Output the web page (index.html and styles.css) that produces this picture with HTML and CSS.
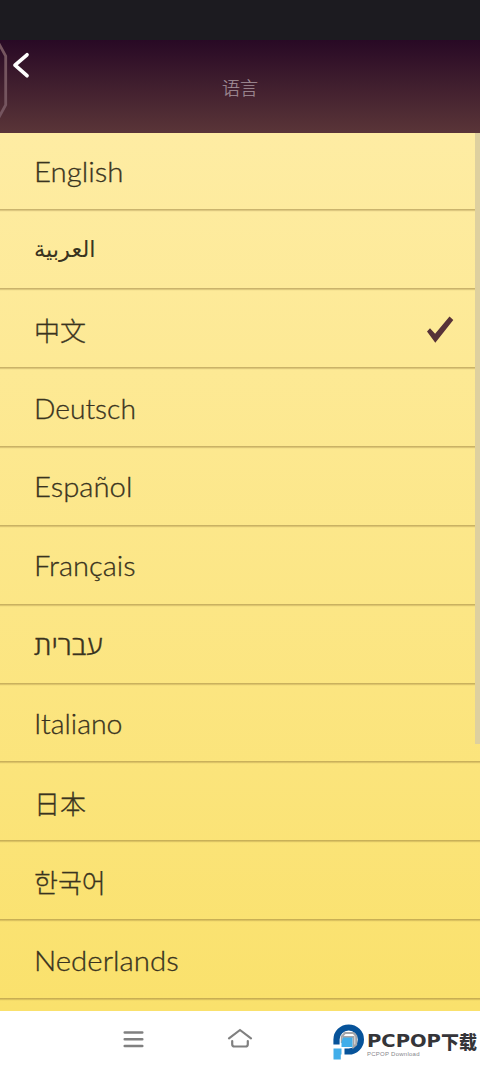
FILE: index.html
```html
<!DOCTYPE html>
<html lang="zh">
<head>
<meta charset="utf-8">
<title>语言</title>
<link rel="stylesheet" href="styles.css">
</head>
<body>
<div class="screen">
  <div class="status"></div>
  <header class="header">
    <svg class="header-art" width="40" height="93" viewBox="0 0 40 93" fill="none">
      <path d="M-2 2L5.7 16V65L-2 79" stroke="#75555f" stroke-width="2.8"/>
      <path d="M27 14.8L15 25.2L27 35.7" stroke="#fff" stroke-width="3.7" stroke-linecap="round" stroke-linejoin="round"/>
    </svg>
    <h1 class="title">语言</h1>
  </header>
  <main class="list">
    <div class="row"><span class="name english">English</span></div>
    <div class="row"><span class="name arabic" lang="ar">العربية</span></div>
    <div class="row"><span class="name cjk">中文</span>
      <svg class="check" width="28" height="28" viewBox="0 0 28 28"><path d="M1 15.4L4 12.2L9.1 17.7L23.5 .5L27.3 4L9.3 26.7Z" fill="#573238"/></svg>
    </div>
    <div class="row"><span class="name deutsch">Deutsch</span></div>
    <div class="row"><span class="name espanol">Español</span></div>
    <div class="row"><span class="name francais">Français</span></div>
    <div class="row"><span class="name hebrew" lang="he">עברית</span></div>
    <div class="row"><span class="name italiano">Italiano</span></div>
    <div class="row"><span class="name cjk japanese" lang="ja">日本</span></div>
    <div class="row"><span class="name korean" lang="ko">한국어</span></div>
    <div class="row"><span class="name nederlands">Nederlands</span></div>
    <div class="scrollbar"></div>
  </main>
  <footer class="nav">
    <svg class="menu" width="22" height="18" viewBox="0 0 22 18"><path d="M1.7 2.5H19.3M1.7 9.3H19.3M1.7 16H19.3" stroke="#808080" stroke-width="2.5" stroke-linecap="round"/></svg>
    <svg class="home" width="28" height="22" viewBox="0 0 28 22" fill="none" stroke="#808080" stroke-width="2.2" stroke-linecap="round" stroke-linejoin="round"><path d="M3 11.4L14 3L25 11.4M6.2 14V17.2Q6.2 19.5 8.5 19.5H19.5Q21.8 19.5 21.8 17.2V14"/></svg>
    <div class="brand">
      <svg class="logo" width="32" height="37" viewBox="0 0 32 37">
        <path d="M3.5 20.5V15.5A12.2 12 0 1 1 15.7 27.5H11.5" fill="none" stroke="#07539a" stroke-width="6.2"/>
        <path d="M8.8 19V12.5L12 9H20.5L23.2 12V20.5L20.5 23V13H10" fill="none" stroke="#a4a5a9" stroke-width="2"/>
        <path d="M10 13.5H19.5V23H8.5V30.5H7.8V35.5H.5V24.5H8.5V18Z" fill="#41aeea"/>
      </svg>
      <div class="brand-text"><div class="brand-name"><span class="brand-latin">PCPOP</span><span class="brand-cn">下载</span></div><div class="brand-sub">PCPOP Download</div></div>
    </div>
  </footer>
</div>
</body>
</html>
```
FILE: styles.css
```css
body { margin: 0; }
.screen {
  width: 480px;
  height: 1067px;
  display: flex;
  flex-direction: column;
  overflow: hidden;
  background: #fff;
}
.status { height: 40px; flex: none; background: #1c1b20; }
.header {
  height: 93px;
  flex: none;
  position: relative;
  display: flex;
  justify-content: center;
  background: linear-gradient(#280925, #5a3538);
}
.header-art { position: absolute; left: 0; top: 0; }
.title {
  margin: 34px 0 0;
  font: 300 18px/27px "Noto Sans CJK SC", sans-serif;
  color: #a28f98;
  -webkit-text-stroke: .2px #a28f98;
}
.list {
  height: 878px;
  flex: none;
  position: relative;
  overflow: hidden;
  box-sizing: border-box;
  background: linear-gradient(#feeca3, #fae16c);
}
.row {
  height: 78.86px;
  box-sizing: border-box;
  border-bottom: 1px solid rgba(139, 112, 50, .45);
  box-shadow: 0 1px 1px rgba(139, 112, 50, .28);
  padding: 3px 26px 0 34px;
  display: flex;
  align-items: center;
  justify-content: space-between;
}
.row:first-child { margin-top: -1.4px; }
.name {
  font: 300 27px/40px Lato, "Open Sans", sans-serif;
  color: #393320;
  white-space: nowrap;
  transform-origin: left center;
  -webkit-text-stroke: .3px #393320;
}
.english { transform: scaleX(1.09); }
.deutsch { transform: scaleX(1.045); }
.espanol { transform: scaleX(1.085); }
.francais { transform: scaleX(1.075); }
.italiano { transform: scaleX(1.055); }
.nederlands { transform: scaleX(1.09); }
.arabic { font: 400 22.5px/36px "DejaVu Sans", sans-serif; -webkit-text-stroke: 0; padding-bottom: 4px; }
.hebrew { font: 300 26px/40px "Open Sans", sans-serif; transform: scaleX(1.09); }
.cjk { font: 300 26px/40px "Noto Sans CJK SC", sans-serif; }
.japanese { font-family: "Noto Sans CJK JP", sans-serif; }
.korean { font: 300 26px/40px "Noto Sans CJK KR", sans-serif; }
.scrollbar {
  position: absolute;
  top: 0;
  right: 0;
  width: 5px;
  height: 611px;
  background: #ded09f;
}
.nav {
  flex: 1;
  display: flex;
  align-items: flex-start;
  background: #fff;
}
.menu { margin: 19px 0 0 123px; }
.home { margin: 16px 0 0 81px; }
.brand { display: flex; margin: 13px 0 0 79px; }
.brand-text { margin: 5px 0 0 2px; color: #353539; }
.brand-name { display: flex; height: 24px; line-height: 24px; }
.brand-latin { font: 700 17px/25px "DejaVu Sans", sans-serif; letter-spacing: 0; width: 74px; transform: scaleX(1.15); transform-origin: left center; }
.brand-cn { font: 900 18px/24px "Noto Sans CJK SC", sans-serif; }
.brand-sub { font: 400 6px/7px "Liberation Sans", sans-serif; color: #86868b; letter-spacing: .25px; margin-top: -2px; }
```
